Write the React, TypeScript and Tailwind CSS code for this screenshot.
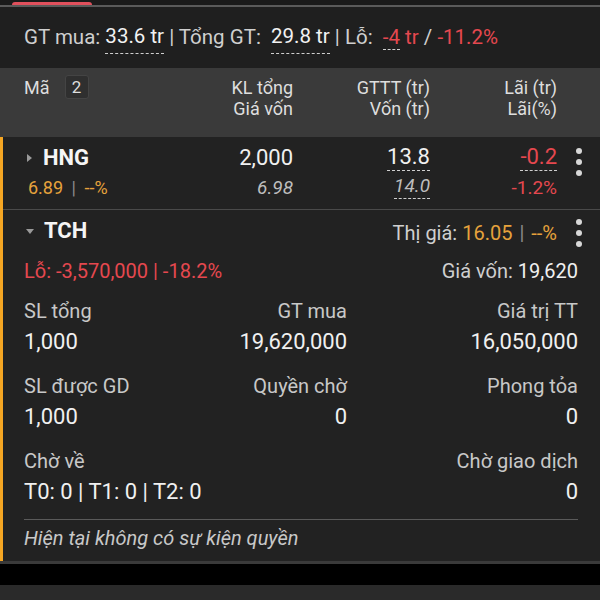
const red = "text-[#e5484f]";
const orange = "text-[#e6a23c]";

const Dashed = ({ children, className = "" }: { children: React.ReactNode; className?: string }) => (
  <span className={`border-b-[1.5px] border-dashed border-[#cfcfcf] pb-[1px] ${className}`}>{children}</span>
);

const Kebab = () => (
  <div className="flex flex-col items-center gap-[5px] w-[43px] pt-[3px]">
    <span className="w-[6px] h-[6px] rounded-full bg-[#d8d8d8]" />
    <span className="w-[6px] h-[6px] rounded-full bg-[#d8d8d8]" />
    <span className="w-[6px] h-[6px] rounded-full bg-[#d8d8d8]" />
  </div>
);

const Field = ({ label, value, align }: { label: string; value: string; align: "left" | "right" }) => (
  <div className={`flex flex-col whitespace-nowrap ${align === "right" ? "items-end" : "items-start"}`}>
    <span className="text-[20px] leading-[24px] text-[#c8c8c8]">{label}</span>
    <span className="text-[22px] leading-[28px] text-[#f0f0f0] mt-[5px]">{value}</span>
  </div>
);

export default function App() {
  return (
    <div className="w-[600px] h-[600px] bg-[#1f1f1f] overflow-hidden flex flex-col" style={{ fontFamily: "Roboto, 'Noto Sans', sans-serif" }}>
      {/* Tab indicator */}
      <div className="h-[2px] shrink-0 bg-[#1a1a1a]" />
      <div className="h-[3px] shrink-0 bg-[#1a1a1a] flex">
        <div className="ml-[12px] w-[80px] bg-[#e0505c] rounded-t-sm" />
      </div>
      <div className="h-[2px] shrink-0 bg-[#5a5a5a]" />

      {/* Summary */}
      <div className="h-[61px] shrink-0 flex items-center px-6 text-[20.5px] text-[#cfcfcf] bg-[#1f1f1f] whitespace-nowrap">
        <span>GT mua:&nbsp;</span>
        <Dashed className="text-[#f2f2f2]">33.6 tr</Dashed>
        <span>&nbsp;| Tổng GT:&nbsp;&nbsp;</span>
        <Dashed className="text-[#f2f2f2]">29.8 tr</Dashed>
        <span>&nbsp;| Lỗ:&nbsp;&nbsp;</span>
        <span className={red}>
          <span className="border-b-[1.5px] border-dashed border-[#cfcfcf]">-4</span> tr
        </span>
        <span>&nbsp;/&nbsp;</span>
        <span className={red}>-11.2%</span>
      </div>

      {/* Header */}
      <div className="h-[69px] shrink-0 bg-[#3a3a3a] flex pt-[9px] pl-6 text-[18px] leading-[21px] text-[#dedede]">
        <div className="w-[156px] flex items-start">
          <span>Mã</span>
          <span className="ml-[15px] -mt-[2px] w-[24px] h-[24px] flex items-center justify-center bg-[#2f2f2f] border border-[#444] rounded-[3px] text-[17px]">2</span>
        </div>
        <div className="w-[113px] flex flex-col items-end">
          <span>KL tổng</span>
          <span>Giá vốn</span>
        </div>
        <div className="w-[137px] flex flex-col items-end">
          <span>GTTT (tr)</span>
          <span>Vốn (tr)</span>
        </div>
        <div className="w-[127px] flex flex-col items-end">
          <span>Lãi (tr)</span>
          <span>Lãi(%)</span>
        </div>
      </div>

      {/* Positions */}
      <div className="shrink-0 border-l-[3px] border-[#f5a623] bg-[#222222]">
        {/* HNG */}
        <div className="h-[73px] flex pl-[21px] pt-[8px] border-b border-[#4a4a4a]">
          <div className="w-[156px] flex flex-col">
            <div className="flex items-center">
              <span className="w-0 h-0 border-y-[4px] border-y-transparent border-l-[5px] border-l-[#9a9a9a] ml-[3px] mr-[11px]" />
              <span className="text-[22px] leading-[26px] font-bold text-[#f5f5f5]">HNG</span>
            </div>
            <div className={`text-[18px] leading-[22px] mt-[6px] pl-[4px] whitespace-nowrap ${orange}`}>
              6.89 <span className="text-[#8a8a8a] mx-[4px]">|</span> --%
            </div>
          </div>
          <div className="w-[113px] flex flex-col items-end">
            <span className="text-[22px] leading-[26px] text-[#f0f0f0]">2,000</span>
            <span className="text-[19px] leading-[22px] mt-[6px] italic text-[#bdbdbd]">6.98</span>
          </div>
          <div className="w-[137px] flex flex-col items-end">
            <Dashed className="text-[22px] leading-[24px] text-[#f0f0f0]">13.8</Dashed>
            <Dashed className="text-[19px] leading-[22px] mt-[4px] italic text-[#bdbdbd]">14.0</Dashed>
          </div>
          <div className="w-[127px] flex flex-col items-end">
            <Dashed className={`text-[22px] leading-[24px] ${red}`}>-0.2</Dashed>
            <span className={`text-[19px] leading-[22px] mt-[6px] ${red}`}>-1.2%</span>
          </div>
          <Kebab />
        </div>

        {/* TCH */}
        <div className="pl-[21px] pt-[8px]">
          <div className="flex items-center h-[26px]">
            <span className="w-0 h-0 border-x-[4px] border-x-transparent border-t-[5px] border-t-[#9a9a9a] ml-[2px] mr-[10px]" />
            <span className="text-[22px] leading-[26px] font-bold text-[#f5f5f5]">TCH</span>
            <span className="ml-auto text-[20px] text-[#cfcfcf] mt-[3px] whitespace-nowrap">
              Thị giá: <span className={orange}>16.05</span>
              <span className="text-[#8a8a8a] mx-[7px]">|</span>
              <span className={orange}>--%</span>
            </span>
            <div className="w-[43px] flex justify-center">
              <Kebab />
            </div>
          </div>
          <div className="flex items-center mt-[15px] pr-[22px] text-[20px] leading-[24px] whitespace-nowrap">
            <span className={red}>Lỗ: -3,570,000 | -18.2%</span>
            <span className="ml-auto text-[#cfcfcf]">
              Giá vốn: <span className="text-[#f0f0f0]">19,620</span>
            </span>
          </div>

          <div className="grid grid-cols-[156px_167px_1fr] pr-[22px] mt-[16px] gap-y-[18px]">
            <Field label="SL tổng" value="1,000" align="left" />
            <Field label="GT mua" value="19,620,000" align="right" />
            <Field label="Giá trị TT" value="16,050,000" align="right" />
            <Field label="SL được GD" value="1,000" align="left" />
            <Field label="Quyền chờ" value="0" align="right" />
            <Field label="Phong tỏa" value="0" align="right" />
            <Field label="Chờ về" value="T0: 0 | T1: 0 | T2: 0" align="left" />
            <div />
            <Field label="Chờ giao dịch" value="0" align="right" />
          </div>

          <div className="mr-[22px] mt-[13px] border-t border-[#5a5a5a] h-[36px] flex items-center">
            <span className="italic text-[20px] text-[#c8c8c8] whitespace-nowrap">Hiện tại không có sự kiện quyền</span>
          </div>
          <div className="h-[6px]" />
        </div>
      </div>
      <div className="h-[3px] shrink-0 bg-[#3a3a3a]" />
      <div className="h-[21px] shrink-0 bg-black" />
      <div className="flex-1 bg-[#2a2a2a]" />
    </div>
  );
}
